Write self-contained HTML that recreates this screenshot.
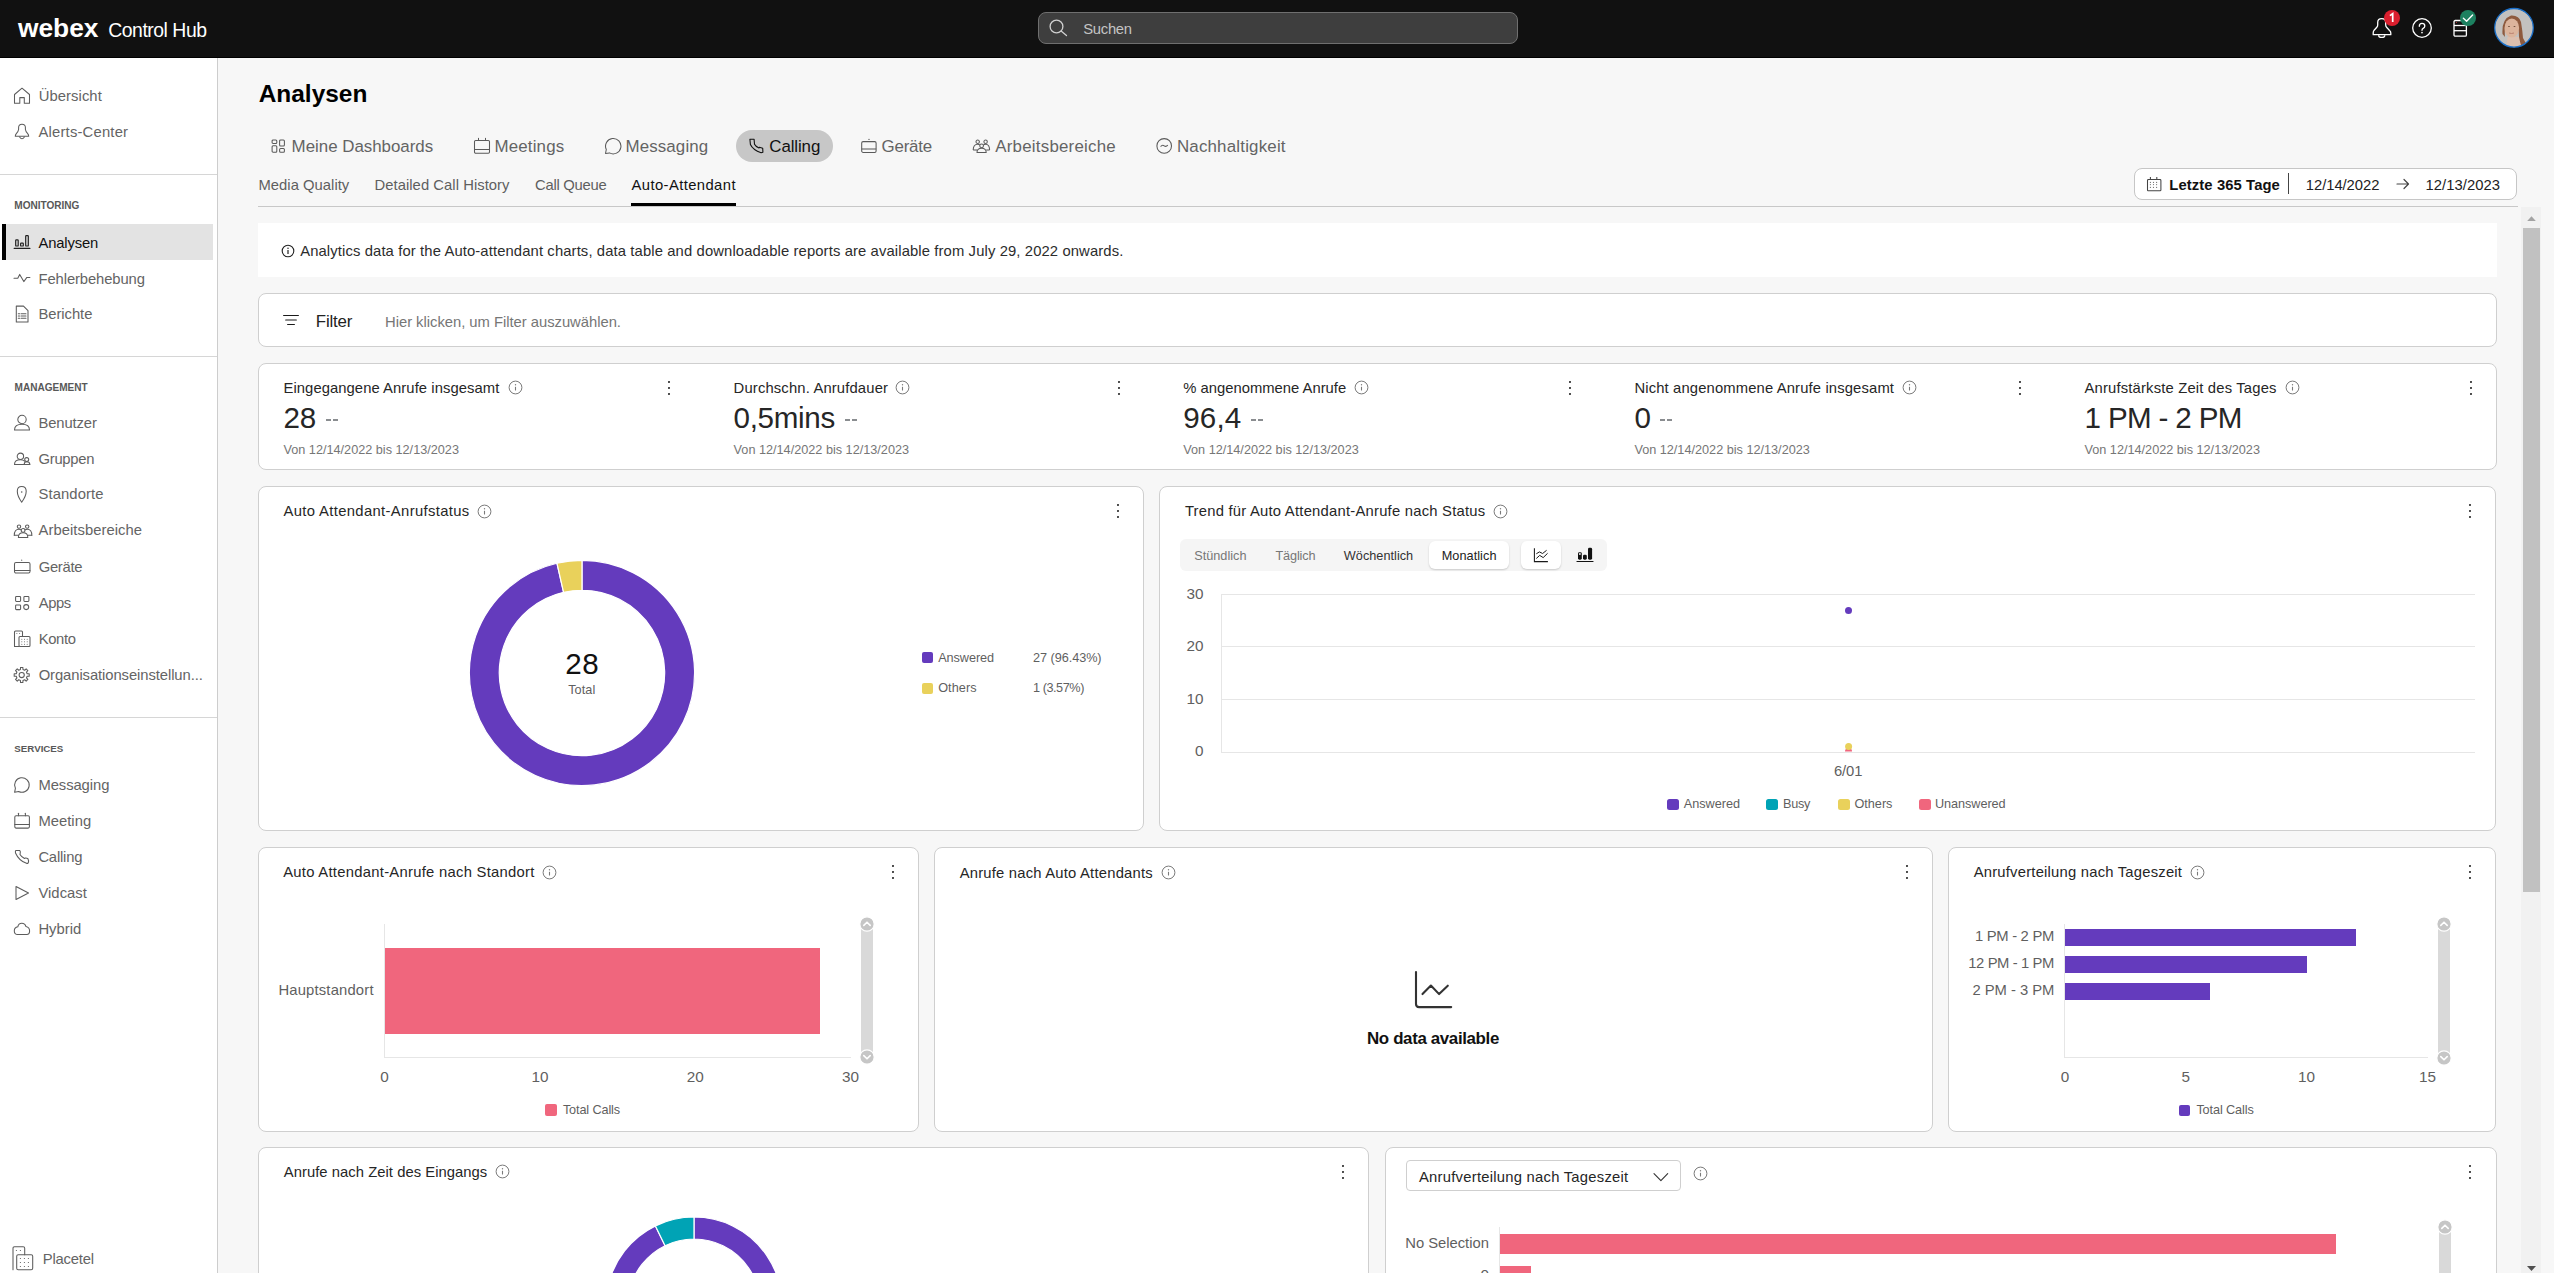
<!DOCTYPE html><html><head><meta charset="utf-8"><style>html,body{margin:0;padding:0;width:2554px;height:1273px;overflow:hidden;background:#f7f7f7;}body{position:relative;font-family:"Liberation Sans",sans-serif;}.t{position:absolute;white-space:nowrap;line-height:1;}</style></head><body><div style="position:absolute;left:218px;top:58px;width:2336px;height:1215px;background:#f7f7f7;"></div>
<div class="t" style="left:258.70px;top:82.00px;font-size:24.45px;color:#000;font-weight:700;">Analysen</div>
<svg style="position:absolute;left:271px;top:139px;" width="15" height="15" viewBox="0 0 15 15"><rect x="1.1" y="0.9" width="4.7" height="3.5" rx="1" fill="none" stroke="#5a5a5a" stroke-width="1.05" stroke-linejoin="round"/><rect x="8.6" y="0.9" width="4.8" height="6.1" rx="1" fill="none" stroke="#5a5a5a" stroke-width="1.05" stroke-linejoin="round"/><rect x="1.1" y="6.7" width="4.7" height="6.5" rx="1" fill="none" stroke="#5a5a5a" stroke-width="1.05" stroke-linejoin="round"/><rect x="8.6" y="9.5" width="4.8" height="3.7" rx="1" fill="none" stroke="#5a5a5a" stroke-width="1.05" stroke-linejoin="round"/></svg>
<div class="t" style="left:291.60px;top:139.00px;font-size:16.90px;color:#646464;letter-spacing:-0.012px;">Meine Dashboards</div>
<svg style="position:absolute;left:473px;top:137px;" width="18" height="18" viewBox="0 0 18 18"><rect x="1.5" y="3.4" width="15" height="12.9" rx="1.2" fill="none" stroke="#5a5a5a" stroke-width="1.05" stroke-linejoin="round"/><line x1="1.5" y1="12.5" x2="16.5" y2="12.5" fill="none" stroke="#5a5a5a" stroke-width="1.05" stroke-linejoin="round"/><line x1="5.5" y1="0.9" x2="5.5" y2="3.4" fill="none" stroke="#5a5a5a" stroke-width="1.05" stroke-linejoin="round"/><line x1="12.5" y1="0.9" x2="12.5" y2="3.4" fill="none" stroke="#5a5a5a" stroke-width="1.05" stroke-linejoin="round"/></svg>
<div class="t" style="left:494.60px;top:139.00px;font-size:16.90px;color:#646464;letter-spacing:0.141px;">Meetings</div>
<svg style="position:absolute;left:604px;top:137px;" width="18" height="18" viewBox="0 0 18 18"><path d="M2.3 12.5 A7.7 7.7 0 1 1 5.5 15.9 L1.5 16.5 Z" fill="none" stroke="#5a5a5a" stroke-width="1.05" stroke-linejoin="round"/></svg>
<div class="t" style="left:625.50px;top:139.00px;font-size:16.90px;color:#646464;letter-spacing:0.124px;">Messaging</div>
<div style="position:absolute;left:736px;top:130px;width:97px;height:32px;border-radius:16px;background:#c7c7c7;"></div>
<svg style="position:absolute;left:748px;top:137px;" width="17" height="17" viewBox="0 0 17 17"><path d="M1.9 2.3 L6.1 2.3 L6.5 7.3 Q7.5 9.5 11 10.9 L11.4 10.2 L14.7 11.3 L14.9 15.2 L13.1 15.7 Q5 13 2.4 7.5 Z" fill="none" stroke="#111" stroke-width="1.1" stroke-linejoin="round"/></svg>
<div class="t" style="left:769.30px;top:139.00px;font-size:16.90px;color:#111;letter-spacing:-0.105px;">Calling</div>
<svg style="position:absolute;left:860px;top:137px;" width="18" height="18" viewBox="0 0 18 18"><rect x="1.7" y="4.6" width="14.4" height="10.8" rx="1.4" fill="none" stroke="#5a5a5a" stroke-width="1.05" stroke-linejoin="round"/><line x1="1.7" y1="12" x2="16.1" y2="12" fill="none" stroke="#5a5a5a" stroke-width="1.05" stroke-linejoin="round"/><circle cx="9" cy="2.4" r="0.65" fill="#5a5a5a"/></svg>
<div class="t" style="left:881.60px;top:139.00px;font-size:16.90px;color:#646464;letter-spacing:-0.226px;">Geräte</div>
<svg style="position:absolute;left:972px;top:138px;" width="19" height="16" viewBox="0 0 19 16"><circle cx="5.7" cy="3.7" r="1.7" fill="none" stroke="#5a5a5a" stroke-width="1.05" stroke-linejoin="round"/><circle cx="13.6" cy="3.7" r="1.7" fill="none" stroke="#5a5a5a" stroke-width="1.05" stroke-linejoin="round"/><circle cx="9.6" cy="7.8" r="1.9" fill="none" stroke="#5a5a5a" stroke-width="1.05" stroke-linejoin="round"/><path d="M1.2 12 Q1.2 6.3 5.7 6.3 Q7 6.3 7.8 6.9" fill="none" stroke="#5a5a5a" stroke-width="1.05" stroke-linejoin="round"/><path d="M17.6 12 Q17.6 6.3 13.6 6.3 Q12.3 6.3 11.5 6.9" fill="none" stroke="#5a5a5a" stroke-width="1.05" stroke-linejoin="round"/><line x1="1.2" y1="12" x2="5" y2="12" fill="none" stroke="#5a5a5a" stroke-width="1.05" stroke-linejoin="round"/><line x1="14.2" y1="12" x2="17.6" y2="12" fill="none" stroke="#5a5a5a" stroke-width="1.05" stroke-linejoin="round"/><path d="M5 14.4 Q5 10.3 9.6 10.3 Q14.2 10.3 14.2 14.4 Z" fill="none" stroke="#5a5a5a" stroke-width="1.05" stroke-linejoin="round"/></svg>
<div class="t" style="left:995.30px;top:139.00px;font-size:16.90px;color:#646464;letter-spacing:0.218px;">Arbeitsbereiche</div>
<svg style="position:absolute;left:1155px;top:137px;" width="18" height="18" viewBox="0 0 18 18"><circle cx="9.2" cy="8.9" r="7.3" fill="none" stroke="#5a5a5a" stroke-width="1.05" stroke-linejoin="round"/><path d="M5.6 9.6 Q7.3 7.4 9.2 8.8 Q11 10.3 12.8 8.2" fill="none" stroke="#5a5a5a" stroke-width="1.05" stroke-linejoin="round"/></svg>
<div class="t" style="left:1176.90px;top:139.00px;font-size:16.90px;color:#646464;letter-spacing:0.198px;">Nachhaltigkeit</div>
<div class="t" style="left:258.50px;top:178.00px;font-size:14.80px;color:#5f5f5f;letter-spacing:0.025px;">Media Quality</div>
<div class="t" style="left:374.50px;top:178.00px;font-size:14.80px;color:#5f5f5f;letter-spacing:0.046px;">Detailed Call History</div>
<div class="t" style="left:535.10px;top:178.00px;font-size:14.80px;color:#5f5f5f;letter-spacing:-0.264px;">Call Queue</div>
<div class="t" style="left:631.50px;top:178.00px;font-size:14.80px;color:#111;letter-spacing:0.406px;">Auto-Attendant</div>
<div style="position:absolute;left:258px;top:206px;width:2260px;height:1px;background:#c8c8c8;"></div>
<div style="position:absolute;left:631px;top:203px;width:105px;height:3px;background:#000;"></div>
<div style="position:absolute;left:2134px;top:168px;width:381px;height:30px;border:1px solid #c6c6c6;border-radius:8px;background:#fff;"></div>
<svg style="position:absolute;left:2146px;top:176px;" width="17" height="17" viewBox="0 0 17 17"><rect x="1.5" y="3.5" width="13.4" height="11.3" rx="0.9" fill="none" stroke="#444" stroke-width="1.05"/><line x1="4.4" y1="1" x2="4.4" y2="3.5" stroke="#444" stroke-width="1.05"/><line x1="10.8" y1="1" x2="10.8" y2="3.5" stroke="#444" stroke-width="1.05"/><circle cx="4.4" cy="6.4" r="0.6" fill="#777"/><circle cx="4.4" cy="8.6" r="0.6" fill="#777"/><circle cx="4.4" cy="11.4" r="0.6" fill="#777"/><circle cx="7.5" cy="6.4" r="0.6" fill="#777"/><circle cx="7.5" cy="8.6" r="0.6" fill="#777"/><circle cx="7.5" cy="11.4" r="0.6" fill="#777"/><circle cx="10.6" cy="6.4" r="0.6" fill="#777"/><circle cx="10.6" cy="8.6" r="0.6" fill="#777"/><circle cx="10.6" cy="11.4" r="0.6" fill="#777"/></svg>
<div class="t" style="left:2169.30px;top:178.00px;font-size:14.80px;color:#111;font-weight:700;letter-spacing:0.104px;">Letzte 365 Tage</div>
<div style="position:absolute;left:2288px;top:173px;width:1px;height:21px;background:#444;"></div>
<div class="t" style="left:2305.80px;top:178.00px;font-size:14.80px;color:#222;letter-spacing:-0.053px;">12/14/2022</div>
<svg style="position:absolute;left:2396px;top:178px;" width="14" height="12" viewBox="0 0 14 12"><path d="M1 6 L12.5 6 M8 1.5 L12.5 6 L8 10.5" fill="none" stroke="#444" stroke-width="1.2" stroke-linecap="round" stroke-linejoin="round"/></svg>
<div class="t" style="left:2425.60px;top:178.00px;font-size:14.80px;color:#222;letter-spacing:0.025px;">12/13/2023</div>
<div style="position:absolute;left:2521px;top:207px;width:20px;height:1066px;background:#f1f1f1;"></div>
<div style="position:absolute;left:2523px;top:228px;width:17px;height:664px;background:#c1c1c1;"></div>
<svg style="position:absolute;left:2526px;top:214px;" width="11" height="8" viewBox="0 0 11 8"><path d="M1.2 7 L5.5 2.2 L9.8 7 Z" fill="#a3a3a3"/></svg>
<svg style="position:absolute;left:2526px;top:1265px;" width="11" height="8" viewBox="0 0 11 8"><path d="M1 1 L5.5 6 L10 1 Z" fill="#505050"/></svg>
<div style="position:absolute;left:258px;top:223px;width:2239px;height:54px;background:#fff;"></div>
<svg style="position:absolute;left:281px;top:244px;" width="14" height="14" viewBox="0 0 14 14"><circle cx="7" cy="7" r="5.8" fill="none" stroke="#222" stroke-width="1.1"/><line x1="7" y1="6" x2="7" y2="10" stroke="#222" stroke-width="1.2"/><circle cx="7" cy="4.2" r="0.75" fill="#222"/></svg>
<div class="t" style="left:300.20px;top:244.00px;font-size:14.80px;color:#2c2c2c;letter-spacing:0.119px;">Analytics data for the Auto-attendant charts, data table and downloadable reports are available from July 29, 2022 onwards.</div>
<div style="position:absolute;left:258px;top:293px;width:2237px;height:52px;border:1px solid #cfcfcf;border-radius:8px;background:#fff;"></div>
<svg style="position:absolute;left:282px;top:313px;" width="18" height="14" viewBox="0 0 18 14"><line x1="1.6" y1="2.5" x2="16.4" y2="2.5" stroke="#1a1a1a" stroke-width="1.15" stroke-linecap="round"/><line x1="3.7" y1="7" x2="14.3" y2="7" stroke="#1a1a1a" stroke-width="1.15" stroke-linecap="round"/><line x1="5.6" y1="11.5" x2="12.4" y2="11.5" stroke="#1a1a1a" stroke-width="1.15" stroke-linecap="round"/></svg>
<div class="t" style="left:315.80px;top:314.00px;font-size:16.90px;color:#222;letter-spacing:-0.204px;">Filter</div>
<div class="t" style="left:385.00px;top:315.00px;font-size:14.80px;color:#767676;letter-spacing:-0.025px;">Hier klicken, um Filter auszuwählen.</div>
<div style="position:absolute;left:258px;top:363px;width:2237px;height:105px;border:1px solid #cfcfcf;border-radius:8px;background:#fff;"></div>
<div class="t" style="left:283.50px;top:381.00px;font-size:14.80px;color:#262626;letter-spacing:0.067px;">Eingegangene Anrufe insgesamt</div>
<svg style="position:absolute;left:508px;top:380px;" width="15" height="15" viewBox="0 0 15 15"><circle cx="7.5" cy="7.5" r="6.4" fill="none" stroke="#7a7a7a" stroke-width="1"/><line x1="7.5" y1="6.8" x2="7.5" y2="10.5" stroke="#7a7a7a" stroke-width="1.1"/><circle cx="7.5" cy="4.8" r="0.7" fill="#7a7a7a"/></svg>
<svg style="position:absolute;left:666.3px;top:379px;" width="6" height="18" viewBox="0 0 6 18"><circle cx="3" cy="3" r="1.05" fill="#222"/><circle cx="3" cy="9" r="1.05" fill="#222"/><circle cx="3" cy="15" r="1.05" fill="#222"/></svg>
<div class="t" style="left:283.50px;top:403.00px;font-size:29.60px;color:#262626;letter-spacing:-0.156px;">28</div>
<div style="position:absolute;left:326px;top:419px;width:5px;height:2px;background:#8a8d90;"></div>
<div style="position:absolute;left:333px;top:419px;width:5px;height:2px;background:#8a8d90;"></div>
<div class="t" style="left:283.50px;top:444.00px;font-size:12.70px;color:#767676;letter-spacing:-0.008px;">Von 12/14/2022 bis 12/13/2023</div>
<div class="t" style="left:733.60px;top:381.00px;font-size:14.80px;color:#262626;letter-spacing:0.150px;">Durchschn. Anrufdauer</div>
<svg style="position:absolute;left:895px;top:380px;" width="15" height="15" viewBox="0 0 15 15"><circle cx="7.5" cy="7.5" r="6.4" fill="none" stroke="#7a7a7a" stroke-width="1"/><line x1="7.5" y1="6.8" x2="7.5" y2="10.5" stroke="#7a7a7a" stroke-width="1.1"/><circle cx="7.5" cy="4.8" r="0.7" fill="#7a7a7a"/></svg>
<svg style="position:absolute;left:1116.4px;top:379px;" width="6" height="18" viewBox="0 0 6 18"><circle cx="3" cy="3" r="1.05" fill="#222"/><circle cx="3" cy="9" r="1.05" fill="#222"/><circle cx="3" cy="15" r="1.05" fill="#222"/></svg>
<div class="t" style="left:733.60px;top:403.00px;font-size:29.60px;color:#262626;letter-spacing:-0.333px;">0,5mins</div>
<div style="position:absolute;left:845px;top:419px;width:5px;height:2px;background:#8a8d90;"></div>
<div style="position:absolute;left:852px;top:419px;width:5px;height:2px;background:#8a8d90;"></div>
<div class="t" style="left:733.60px;top:444.00px;font-size:12.70px;color:#767676;letter-spacing:-0.008px;">Von 12/14/2022 bis 12/13/2023</div>
<div class="t" style="left:1183.30px;top:381.00px;font-size:14.80px;color:#262626;">% angenommene Anrufe</div>
<svg style="position:absolute;left:1354px;top:380px;" width="15" height="15" viewBox="0 0 15 15"><circle cx="7.5" cy="7.5" r="6.4" fill="none" stroke="#7a7a7a" stroke-width="1"/><line x1="7.5" y1="6.8" x2="7.5" y2="10.5" stroke="#7a7a7a" stroke-width="1.1"/><circle cx="7.5" cy="4.8" r="0.7" fill="#7a7a7a"/></svg>
<svg style="position:absolute;left:1566.5px;top:379px;" width="6" height="18" viewBox="0 0 6 18"><circle cx="3" cy="3" r="1.05" fill="#222"/><circle cx="3" cy="9" r="1.05" fill="#222"/><circle cx="3" cy="15" r="1.05" fill="#222"/></svg>
<div class="t" style="left:1183.30px;top:403.00px;font-size:29.60px;color:#262626;letter-spacing:0.109px;">96,4</div>
<div style="position:absolute;left:1251px;top:419px;width:5px;height:2px;background:#8a8d90;"></div>
<div style="position:absolute;left:1258px;top:419px;width:5px;height:2px;background:#8a8d90;"></div>
<div class="t" style="left:1183.30px;top:444.00px;font-size:12.70px;color:#767676;letter-spacing:-0.008px;">Von 12/14/2022 bis 12/13/2023</div>
<div class="t" style="left:1634.40px;top:381.00px;font-size:14.80px;color:#262626;letter-spacing:0.139px;">Nicht angenommene Anrufe insgesamt</div>
<svg style="position:absolute;left:1902px;top:380px;" width="15" height="15" viewBox="0 0 15 15"><circle cx="7.5" cy="7.5" r="6.4" fill="none" stroke="#7a7a7a" stroke-width="1"/><line x1="7.5" y1="6.8" x2="7.5" y2="10.5" stroke="#7a7a7a" stroke-width="1.1"/><circle cx="7.5" cy="4.8" r="0.7" fill="#7a7a7a"/></svg>
<svg style="position:absolute;left:2017px;top:379px;" width="6" height="18" viewBox="0 0 6 18"><circle cx="3" cy="3" r="1.05" fill="#222"/><circle cx="3" cy="9" r="1.05" fill="#222"/><circle cx="3" cy="15" r="1.05" fill="#222"/></svg>
<div class="t" style="left:1634.40px;top:403.00px;font-size:29.60px;color:#262626;">0</div>
<div style="position:absolute;left:1660px;top:419px;width:5px;height:2px;background:#8a8d90;"></div>
<div style="position:absolute;left:1667px;top:419px;width:5px;height:2px;background:#8a8d90;"></div>
<div class="t" style="left:1634.40px;top:444.00px;font-size:12.70px;color:#767676;letter-spacing:-0.008px;">Von 12/14/2022 bis 12/13/2023</div>
<div class="t" style="left:2084.50px;top:381.00px;font-size:14.80px;color:#262626;letter-spacing:0.174px;">Anrufstärkste Zeit des Tages</div>
<svg style="position:absolute;left:2285px;top:380px;" width="15" height="15" viewBox="0 0 15 15"><circle cx="7.5" cy="7.5" r="6.4" fill="none" stroke="#7a7a7a" stroke-width="1"/><line x1="7.5" y1="6.8" x2="7.5" y2="10.5" stroke="#7a7a7a" stroke-width="1.1"/><circle cx="7.5" cy="4.8" r="0.7" fill="#7a7a7a"/></svg>
<svg style="position:absolute;left:2467.8px;top:379px;" width="6" height="18" viewBox="0 0 6 18"><circle cx="3" cy="3" r="1.05" fill="#222"/><circle cx="3" cy="9" r="1.05" fill="#222"/><circle cx="3" cy="15" r="1.05" fill="#222"/></svg>
<div class="t" style="left:2084.50px;top:403.00px;font-size:29.60px;color:#262626;letter-spacing:-0.643px;">1 PM - 2 PM</div>
<div class="t" style="left:2084.50px;top:444.00px;font-size:12.70px;color:#767676;letter-spacing:-0.008px;">Von 12/14/2022 bis 12/13/2023</div>
<div style="position:absolute;left:258px;top:486px;width:884px;height:343px;border:1px solid #cfcfcf;border-radius:8px;background:#fff;"></div>
<div class="t" style="left:283.50px;top:504.00px;font-size:14.80px;color:#262626;letter-spacing:0.354px;">Auto Attendant-Anrufstatus</div>
<svg style="position:absolute;left:477px;top:504px;" width="15" height="15" viewBox="0 0 15 15"><circle cx="7.5" cy="7.5" r="6.4" fill="none" stroke="#7a7a7a" stroke-width="1"/><line x1="7.5" y1="6.8" x2="7.5" y2="10.5" stroke="#7a7a7a" stroke-width="1.1"/><circle cx="7.5" cy="4.8" r="0.7" fill="#7a7a7a"/></svg>
<svg style="position:absolute;left:1115px;top:502px;" width="6" height="18" viewBox="0 0 6 18"><circle cx="3" cy="3" r="1.05" fill="#222"/><circle cx="3" cy="9" r="1.05" fill="#222"/><circle cx="3" cy="15" r="1.05" fill="#222"/></svg>
<svg style="position:absolute;left:452px;top:542.5px;" width="260" height="260" viewBox="0 0 260 260"><path d="M130.00 17.40 A112.6 112.6 0 1 1 104.94 20.22 L111.59 49.37 A82.7 82.7 0 1 0 130.00 47.30 Z" fill="#643bbd" stroke="#fff" stroke-width="1.2"/><path d="M104.94 20.22 A112.6 112.6 0 0 1 129.98 17.40 L129.99 47.30 A82.7 82.7 0 0 0 111.59 49.37 Z" fill="#e9d15b" stroke="#fff" stroke-width="1.2"/></svg>
<div class="t" style="left:565.30px;top:649.00px;font-size:29.60px;color:#111;letter-spacing:0.544px;">28</div>
<div class="t" style="left:568.15px;top:684.00px;font-size:12.70px;color:#5f5f5f;letter-spacing:0.076px;">Total</div>
<div style="position:absolute;left:921.5px;top:651.5px;width:11px;height:11px;background:#643bbd;border-radius:2px;"></div>
<div class="t" style="left:938.20px;top:652.00px;font-size:12.70px;color:#5f5f5f;letter-spacing:-0.064px;">Answered</div>
<div class="t" style="left:1033.00px;top:652.00px;font-size:12.70px;color:#5f5f5f;letter-spacing:-0.052px;">27 (96.43%)</div>
<div style="position:absolute;left:921.5px;top:682.5px;width:11px;height:11px;background:#e9d15b;border-radius:2px;"></div>
<div class="t" style="left:938.20px;top:682.00px;font-size:12.70px;color:#5f5f5f;letter-spacing:0.060px;">Others</div>
<div class="t" style="left:1033.00px;top:682.00px;font-size:12.70px;color:#5f5f5f;letter-spacing:-0.457px;">1 (3.57%)</div>
<div style="position:absolute;left:1159px;top:486px;width:1335px;height:343px;border:1px solid #cfcfcf;border-radius:8px;background:#fff;"></div>
<div class="t" style="left:1184.90px;top:504.00px;font-size:14.80px;color:#262626;letter-spacing:0.230px;">Trend für Auto Attendant-Anrufe nach Status</div>
<svg style="position:absolute;left:1493px;top:504px;" width="15" height="15" viewBox="0 0 15 15"><circle cx="7.5" cy="7.5" r="6.4" fill="none" stroke="#7a7a7a" stroke-width="1"/><line x1="7.5" y1="6.8" x2="7.5" y2="10.5" stroke="#7a7a7a" stroke-width="1.1"/><circle cx="7.5" cy="4.8" r="0.7" fill="#7a7a7a"/></svg>
<svg style="position:absolute;left:2466.6px;top:502px;" width="6" height="18" viewBox="0 0 6 18"><circle cx="3" cy="3" r="1.05" fill="#222"/><circle cx="3" cy="9" r="1.05" fill="#222"/><circle cx="3" cy="15" r="1.05" fill="#222"/></svg>
<div style="position:absolute;left:1180px;top:539px;width:427px;height:32px;border-radius:6px;background:#f5f5f5;"></div>
<div class="t" style="left:1194.20px;top:550.00px;font-size:12.70px;color:#777;letter-spacing:0.017px;">Stündlich</div>
<div class="t" style="left:1275.50px;top:550.00px;font-size:12.70px;color:#777;letter-spacing:-0.160px;">Täglich</div>
<div class="t" style="left:1343.80px;top:550.00px;font-size:12.70px;color:#333;letter-spacing:0.025px;">Wöchentlich</div>
<div style="position:absolute;left:1429px;top:541px;width:80px;height:28px;border-radius:6px;background:#fff;box-shadow:0 1px 2px rgba(0,0,0,0.18);"></div>
<div class="t" style="left:1441.70px;top:550.00px;font-size:12.70px;color:#222;letter-spacing:0.056px;">Monatlich</div>
<div style="position:absolute;left:1521px;top:541px;width:40px;height:28px;border-radius:6px;background:#fff;box-shadow:0 1px 2px rgba(0,0,0,0.18);"></div>
<svg style="position:absolute;left:1533px;top:547px;" width="17" height="17" viewBox="0 0 17 17"><path d="M1.4 1.2 L1.4 14.6 L14.9 14.6" fill="none" stroke="#1a1a1a" stroke-width="1.05"/><path d="M3.3 6.8 L6.4 4.9 L9.6 6.5 L13.6 3.3" fill="none" stroke="#1a1a1a" stroke-width="1"/><path d="M3.3 11.5 L6.7 8.4 L10.2 10.6 L14.6 6.3" fill="none" stroke="#1a1a1a" stroke-width="1"/></svg>
<svg style="position:absolute;left:1576px;top:547px;" width="18" height="17" viewBox="0 0 18 17"><rect x="2" y="5.2" width="3.8" height="7.5" rx="1.4" fill="#111"/><circle cx="3.9" cy="7" r="0.9" fill="#fff"/><rect x="7" y="7.7" width="3.8" height="5" rx="1.4" fill="#111"/><rect x="12" y="0.8" width="4.1" height="11.9" rx="1.4" fill="#111"/><line x1="1" y1="14.5" x2="17" y2="14.5" stroke="#111" stroke-width="1.2" stroke-linecap="round"/></svg>
<div style="position:absolute;left:1221px;top:594px;width:1254px;height:1px;background:#e6e6e6;"></div>
<div class="t" style="left:1186.42px;top:586.00px;font-size:15.30px;color:#5f5f5f;">30</div>
<div style="position:absolute;left:1221px;top:646px;width:1254px;height:1px;background:#e6e6e6;"></div>
<div class="t" style="left:1186.42px;top:638.00px;font-size:15.30px;color:#5f5f5f;">20</div>
<div style="position:absolute;left:1221px;top:699px;width:1254px;height:1px;background:#e6e6e6;"></div>
<div class="t" style="left:1186.42px;top:691.00px;font-size:15.30px;color:#5f5f5f;">10</div>
<div style="position:absolute;left:1221px;top:752px;width:1254px;height:1px;background:#e6e6e6;"></div>
<div class="t" style="left:1194.91px;top:743.00px;font-size:15.30px;color:#5f5f5f;">0</div>
<div style="position:absolute;left:1221px;top:594px;width:1px;height:158px;background:#e6e6e6;"></div>
<svg style="position:absolute;left:1842px;top:604px;" width="13" height="13" viewBox="0 0 13 13"><circle cx="6.5" cy="6.6" r="3.5" fill="#643bbd"/></svg>
<svg style="position:absolute;left:1842px;top:740px;" width="13" height="13" viewBox="0 0 13 13"><path d="M3 11.5 A3.5 3.5 0 0 1 10 11.5 Z" fill="#f0667d"/><circle cx="6.6" cy="6.6" r="3.5" fill="#e9d15b"/></svg>
<div class="t" style="left:1834.00px;top:764.00px;font-size:14.80px;color:#5f5f5f;letter-spacing:-0.129px;">6/01</div>
<div style="position:absolute;left:1666.6px;top:798.7px;width:12px;height:11.6px;background:#643bbd;border-radius:2.5px;"></div>
<div class="t" style="left:1683.80px;top:798.00px;font-size:12.70px;color:#5f5f5f;letter-spacing:-0.036px;">Answered</div>
<div style="position:absolute;left:1765.9px;top:798.7px;width:12px;height:11.6px;background:#00a3b5;border-radius:2.5px;"></div>
<div class="t" style="left:1783.00px;top:798.00px;font-size:12.70px;color:#5f5f5f;letter-spacing:-0.286px;">Busy</div>
<div style="position:absolute;left:1837.8px;top:798.7px;width:12px;height:11.6px;background:#e9d15b;border-radius:2.5px;"></div>
<div class="t" style="left:1854.40px;top:798.00px;font-size:12.70px;color:#5f5f5f;">Others</div>
<div style="position:absolute;left:1918.8px;top:798.7px;width:12px;height:11.6px;background:#f0667d;border-radius:2.5px;"></div>
<div class="t" style="left:1934.90px;top:798.00px;font-size:12.70px;color:#5f5f5f;letter-spacing:-0.057px;">Unanswered</div>
<div style="position:absolute;left:258px;top:847px;width:659px;height:283px;border:1px solid #cfcfcf;border-radius:8px;background:#fff;"></div>
<div class="t" style="left:283.20px;top:865.00px;font-size:14.80px;color:#262626;letter-spacing:0.276px;">Auto Attendant-Anrufe nach Standort</div>
<svg style="position:absolute;left:542px;top:865px;" width="15" height="15" viewBox="0 0 15 15"><circle cx="7.5" cy="7.5" r="6.4" fill="none" stroke="#7a7a7a" stroke-width="1"/><line x1="7.5" y1="6.8" x2="7.5" y2="10.5" stroke="#7a7a7a" stroke-width="1.1"/><circle cx="7.5" cy="4.8" r="0.7" fill="#7a7a7a"/></svg>
<svg style="position:absolute;left:890px;top:863px;" width="6" height="18" viewBox="0 0 6 18"><circle cx="3" cy="3" r="1.05" fill="#222"/><circle cx="3" cy="9" r="1.05" fill="#222"/><circle cx="3" cy="15" r="1.05" fill="#222"/></svg>
<div style="position:absolute;left:384px;top:924px;width:1px;height:134px;background:#e6e6e6;"></div>
<div style="position:absolute;left:384px;top:1057px;width:467px;height:1px;background:#e6e6e6;"></div>
<div style="position:absolute;left:385px;top:948px;width:435px;height:86px;background:#f0667d;"></div>
<div class="t" style="left:278.40px;top:983.00px;font-size:14.80px;color:#5f5f5f;letter-spacing:0.180px;">Hauptstandort</div>
<div class="t" style="left:380.35px;top:1069.00px;font-size:15.30px;color:#5f5f5f;">0</div>
<div class="t" style="left:531.51px;top:1069.00px;font-size:15.30px;color:#5f5f5f;">10</div>
<div class="t" style="left:686.81px;top:1069.00px;font-size:15.30px;color:#5f5f5f;">20</div>
<div class="t" style="left:842.11px;top:1069.00px;font-size:15.30px;color:#5f5f5f;">30</div>
<div style="position:absolute;left:861px;top:924px;width:12px;height:133px;background:#d9d9d9;"></div>
<svg style="position:absolute;left:858px;top:915px;" width="18" height="18" viewBox="0 0 18 18"><circle cx="9" cy="9" r="7.2" fill="#c6c6c6" stroke="#fff" stroke-width="1.2"/><path transform="translate(9 9)" d="M-3.2 1.4 L0 -1.8 L3.2 1.4" fill="none" stroke="#fff" stroke-width="1.6" stroke-linecap="round" stroke-linejoin="round"/></svg>
<svg style="position:absolute;left:858px;top:1048px;" width="18" height="18" viewBox="0 0 18 18"><circle cx="9" cy="9" r="7.2" fill="#c6c6c6" stroke="#fff" stroke-width="1.2"/><path transform="translate(9 9)" d="M-3.2 -1.4 L0 1.8 L3.2 -1.4" fill="none" stroke="#fff" stroke-width="1.6" stroke-linecap="round" stroke-linejoin="round"/></svg>
<div style="position:absolute;left:545.3px;top:1104.2px;width:11.4px;height:12px;background:#f0667d;border-radius:2px;"></div>
<div class="t" style="left:562.90px;top:1104.00px;font-size:12.70px;color:#5f5f5f;letter-spacing:-0.131px;">Total Calls</div>
<div style="position:absolute;left:934px;top:847px;width:997px;height:283px;border:1px solid #cfcfcf;border-radius:8px;background:#fff;"></div>
<div class="t" style="left:959.70px;top:866.00px;font-size:14.80px;color:#262626;letter-spacing:0.208px;">Anrufe nach Auto Attendants</div>
<svg style="position:absolute;left:1161px;top:865px;" width="15" height="15" viewBox="0 0 15 15"><circle cx="7.5" cy="7.5" r="6.4" fill="none" stroke="#7a7a7a" stroke-width="1"/><line x1="7.5" y1="6.8" x2="7.5" y2="10.5" stroke="#7a7a7a" stroke-width="1.1"/><circle cx="7.5" cy="4.8" r="0.7" fill="#7a7a7a"/></svg>
<svg style="position:absolute;left:1903.7px;top:863px;" width="6" height="18" viewBox="0 0 6 18"><circle cx="3" cy="3" r="1.05" fill="#222"/><circle cx="3" cy="9" r="1.05" fill="#222"/><circle cx="3" cy="15" r="1.05" fill="#222"/></svg>
<svg style="position:absolute;left:1412px;top:970px;" width="42" height="40" viewBox="0 0 42 40"><path d="M4 2.1 L4 34 Q4 37.1 7.1 37.1 L39.2 37.1" fill="none" stroke="#333" stroke-width="2.1" stroke-linecap="round"/><path d="M10.5 24.1 L18.9 15.5 L27.1 24.1 L35.8 15.7" fill="none" stroke="#333" stroke-width="2.1" stroke-linecap="round" stroke-linejoin="round"/></svg>
<div class="t" style="left:1367.00px;top:1031.00px;font-size:16.90px;color:#111;font-weight:700;letter-spacing:-0.355px;">No data available</div>
<div style="position:absolute;left:1948px;top:847px;width:546px;height:283px;border:1px solid #cfcfcf;border-radius:8px;background:#fff;"></div>
<div class="t" style="left:1973.70px;top:865.00px;font-size:14.80px;color:#262626;letter-spacing:0.214px;">Anrufverteilung nach Tageszeit</div>
<svg style="position:absolute;left:2190px;top:865px;" width="15" height="15" viewBox="0 0 15 15"><circle cx="7.5" cy="7.5" r="6.4" fill="none" stroke="#7a7a7a" stroke-width="1"/><line x1="7.5" y1="6.8" x2="7.5" y2="10.5" stroke="#7a7a7a" stroke-width="1.1"/><circle cx="7.5" cy="4.8" r="0.7" fill="#7a7a7a"/></svg>
<svg style="position:absolute;left:2467.3px;top:863px;" width="6" height="18" viewBox="0 0 6 18"><circle cx="3" cy="3" r="1.05" fill="#222"/><circle cx="3" cy="9" r="1.05" fill="#222"/><circle cx="3" cy="15" r="1.05" fill="#222"/></svg>
<div style="position:absolute;left:2064px;top:924px;width:1px;height:134px;background:#e6e6e6;"></div>
<div style="position:absolute;left:2064px;top:1057px;width:364px;height:1px;background:#e6e6e6;"></div>
<div style="position:absolute;left:2065px;top:929px;width:290.5px;height:17px;background:#643bbd;"></div>
<div class="t" style="left:1974.90px;top:929.00px;font-size:14.80px;color:#5f5f5f;letter-spacing:-0.281px;">1 PM - 2 PM</div>
<div style="position:absolute;left:2065px;top:956px;width:242px;height:17px;background:#643bbd;"></div>
<div class="t" style="left:1968.30px;top:956.00px;font-size:14.80px;color:#5f5f5f;letter-spacing:-0.409px;">12 PM - 1 PM</div>
<div style="position:absolute;left:2065px;top:983px;width:145.30000000000018px;height:17px;background:#643bbd;"></div>
<div class="t" style="left:1972.50px;top:983.00px;font-size:14.80px;color:#5f5f5f;letter-spacing:-0.041px;">2 PM - 3 PM</div>
<div class="t" style="left:2060.65px;top:1069.00px;font-size:15.30px;color:#5f5f5f;">0</div>
<div class="t" style="left:2181.55px;top:1069.00px;font-size:15.30px;color:#5f5f5f;">5</div>
<div class="t" style="left:2298.01px;top:1069.00px;font-size:15.30px;color:#5f5f5f;">10</div>
<div class="t" style="left:2418.91px;top:1069.00px;font-size:15.30px;color:#5f5f5f;">15</div>
<div style="position:absolute;left:2438px;top:924px;width:12px;height:134px;background:#d9d9d9;"></div>
<svg style="position:absolute;left:2435px;top:915px;" width="18" height="18" viewBox="0 0 18 18"><circle cx="9" cy="9" r="7.2" fill="#c6c6c6" stroke="#fff" stroke-width="1.2"/><path transform="translate(9 9)" d="M-3.2 1.4 L0 -1.8 L3.2 1.4" fill="none" stroke="#fff" stroke-width="1.6" stroke-linecap="round" stroke-linejoin="round"/></svg>
<svg style="position:absolute;left:2435px;top:1049px;" width="18" height="18" viewBox="0 0 18 18"><circle cx="9" cy="9" r="7.2" fill="#c6c6c6" stroke="#fff" stroke-width="1.2"/><path transform="translate(9 9)" d="M-3.2 -1.4 L0 1.8 L3.2 -1.4" fill="none" stroke="#fff" stroke-width="1.6" stroke-linecap="round" stroke-linejoin="round"/></svg>
<div style="position:absolute;left:2178.7px;top:1104.7px;width:11.6px;height:11.5px;background:#643bbd;border-radius:2px;"></div>
<div class="t" style="left:2196.40px;top:1104.00px;font-size:12.70px;color:#5f5f5f;letter-spacing:-0.111px;">Total Calls</div>
<div style="position:absolute;left:258px;top:1147px;width:1109px;height:142px;border:1px solid #cfcfcf;border-radius:8px;background:#fff;"></div>
<div class="t" style="left:283.80px;top:1165.00px;font-size:14.80px;color:#262626;letter-spacing:0.040px;">Anrufe nach Zeit des Eingangs</div>
<svg style="position:absolute;left:495px;top:1164px;" width="15" height="15" viewBox="0 0 15 15"><circle cx="7.5" cy="7.5" r="6.4" fill="none" stroke="#7a7a7a" stroke-width="1"/><line x1="7.5" y1="6.8" x2="7.5" y2="10.5" stroke="#7a7a7a" stroke-width="1.1"/><circle cx="7.5" cy="4.8" r="0.7" fill="#7a7a7a"/></svg>
<svg style="position:absolute;left:1340.2px;top:1163px;" width="6" height="18" viewBox="0 0 6 18"><circle cx="3" cy="3" r="1.05" fill="#222"/><circle cx="3" cy="9" r="1.05" fill="#222"/><circle cx="3" cy="15" r="1.05" fill="#222"/></svg>
<svg style="position:absolute;left:594.4px;top:1204.5px;" width="200" height="200" viewBox="0 0 200 200"><path d="M100.00 12.00 A88 88 0 1 1 61.42 20.91 L71.07 40.68 A66 66 0 1 0 100.00 34.00 Z" fill="#643bbd" stroke="#fff" stroke-width="1.2"/><path d="M61.42 20.91 A88 88 0 0 1 99.98 12.00 L99.99 34.00 A66 66 0 0 0 71.07 40.68 Z" fill="#00a3b5" stroke="#fff" stroke-width="1.2"/></svg>
<div style="position:absolute;left:1385px;top:1147px;width:1110px;height:142px;border:1px solid #cfcfcf;border-radius:8px;background:#fff;"></div>
<div style="position:absolute;left:1406px;top:1160px;width:273px;height:29px;border:1px solid #cfcfcf;border-radius:4px;background:#fff;"></div>
<div class="t" style="left:1419.00px;top:1170.00px;font-size:14.80px;color:#262626;letter-spacing:0.245px;">Anrufverteilung nach Tageszeit</div>
<svg style="position:absolute;left:1652px;top:1170px;" width="18" height="13" viewBox="0 0 18 13"><path d="M2 3.6 L8.9 10.6 L15.7 3.6" fill="none" stroke="#333" stroke-width="1.1" stroke-linecap="round" stroke-linejoin="round"/></svg>
<svg style="position:absolute;left:1693px;top:1166px;" width="15" height="15" viewBox="0 0 15 15"><circle cx="7.5" cy="7.5" r="6.4" fill="none" stroke="#7a7a7a" stroke-width="1"/><line x1="7.5" y1="6.8" x2="7.5" y2="10.5" stroke="#7a7a7a" stroke-width="1.1"/><circle cx="7.5" cy="4.8" r="0.7" fill="#7a7a7a"/></svg>
<svg style="position:absolute;left:2467px;top:1163px;" width="6" height="18" viewBox="0 0 6 18"><circle cx="3" cy="3" r="1.05" fill="#222"/><circle cx="3" cy="9" r="1.05" fill="#222"/><circle cx="3" cy="15" r="1.05" fill="#222"/></svg>
<div style="position:absolute;left:1499px;top:1227px;width:1px;height:46px;background:#e6e6e6;"></div>
<div style="position:absolute;left:1500px;top:1234px;width:836px;height:20px;background:#f0667d;"></div>
<div style="position:absolute;left:1500px;top:1266px;width:31px;height:7px;background:#f0667d;"></div>
<div class="t" style="left:1405.30px;top:1236.00px;font-size:14.80px;color:#5f5f5f;letter-spacing:-0.029px;">No Selection</div>
<div class="t" style="left:1480.41px;top:1267.00px;font-size:15.30px;color:#5f5f5f;">0</div>
<div style="position:absolute;left:2438.8px;top:1227.3px;width:12px;height:172.70000000000005px;background:#d9d9d9;"></div>
<svg style="position:absolute;left:2435.8px;top:1218.3px;" width="18" height="18" viewBox="0 0 18 18"><circle cx="9" cy="9" r="7.2" fill="#c6c6c6" stroke="#fff" stroke-width="1.2"/><path transform="translate(9 9)" d="M-3.2 1.4 L0 -1.8 L3.2 1.4" fill="none" stroke="#fff" stroke-width="1.6" stroke-linecap="round" stroke-linejoin="round"/></svg>
<svg style="position:absolute;left:2435.8px;top:1391px;" width="18" height="18" viewBox="0 0 18 18"><circle cx="9" cy="9" r="7.2" fill="#c6c6c6" stroke="#fff" stroke-width="1.2"/><path transform="translate(9 9)" d="M-3.2 -1.4 L0 1.8 L3.2 -1.4" fill="none" stroke="#fff" stroke-width="1.6" stroke-linecap="round" stroke-linejoin="round"/></svg>
<div style="position:absolute;left:0px;top:58px;width:217px;height:1215px;background:#fff;"></div>
<div style="position:absolute;left:217px;top:58px;width:1px;height:1215px;background:#cdcdcd;"></div>
<div class="t" style="left:38.80px;top:89.00px;font-size:14.80px;color:#646464;letter-spacing:0.059px;">Übersicht</div>
<svg style="position:absolute;left:13px;top:86px;" width="20" height="20" viewBox="0 0 20 20"><path d="M1.5 17.2 L1.5 8.5 L9 2.2 L16.5 8.5 L16.5 17.2 L11.3 17.2 L11.3 11.6 L6.8 11.6 L6.8 17.2 Z" fill="none" stroke="#5c5c5c" stroke-width="1.05" stroke-linejoin="round" stroke-linecap="round"/></svg>
<div class="t" style="left:38.50px;top:125.00px;font-size:14.80px;color:#646464;letter-spacing:0.194px;">Alerts-Center</div>
<svg style="position:absolute;left:13px;top:122px;" width="20" height="20" viewBox="0 0 20 20"><path d="M2.3 14.3 L15.7 14.3 Q15.7 12.5 14.5 11.3 Q12.7 9.5 12.4 7.5 L12.4 5.5 Q12.4 2.3 9 2.3 Q5.6 2.3 5.6 5.5 L5.6 7.5 Q5.3 9.5 3.5 11.3 Q2.3 12.5 2.3 14.3 Z" fill="none" stroke="#5c5c5c" stroke-width="1.05" stroke-linejoin="round" stroke-linecap="round"/><path d="M6.6 15 Q9 18.5 11.4 15" fill="none" stroke="#5c5c5c" stroke-width="1.05" stroke-linejoin="round" stroke-linecap="round"/></svg>
<div style="position:absolute;left:0px;top:174px;width:217px;height:1px;background:#d6d6d6;"></div>
<div class="t" style="left:14.30px;top:201.00px;font-size:10.06px;color:#585858;font-weight:700;">MONITORING</div>
<div style="position:absolute;left:6px;top:224px;width:207px;height:36px;background:#e3e3e3;"></div>
<div style="position:absolute;left:2px;top:224px;width:4px;height:36px;background:#000;"></div>
<div class="t" style="left:38.50px;top:236.00px;font-size:14.80px;color:#111;letter-spacing:-0.172px;">Analysen</div>
<svg style="position:absolute;left:13px;top:233px;" width="20" height="20" viewBox="0 0 20 20"><rect x="2.7" y="6.8" width="2.5" height="6.2" rx="0.6" fill="none" stroke="#222" stroke-width="1.2" stroke-linejoin="round" stroke-linecap="round"/><rect x="7.6" y="10.2" width="2.7" height="2.8" rx="0.6" fill="none" stroke="#222" stroke-width="1.2" stroke-linejoin="round" stroke-linecap="round"/><rect x="12.7" y="2.7" width="2.6" height="10.3" rx="0.6" fill="none" stroke="#222" stroke-width="1.2" stroke-linejoin="round" stroke-linecap="round"/><line x1="1.2" y1="15.4" x2="16.9" y2="15.4" fill="none" stroke="#222" stroke-width="1.2" stroke-linejoin="round" stroke-linecap="round"/></svg>
<div class="t" style="left:38.50px;top:272.00px;font-size:14.80px;color:#646464;letter-spacing:-0.101px;">Fehlerbehebung</div>
<svg style="position:absolute;left:13px;top:270px;" width="20" height="20" viewBox="0 0 20 20"><path d="M1 8.2 L4.8 8.2 L6.7 4.4 L10.8 11.6 L13.9 7.4 L16.9 7.4" fill="none" stroke="#5c5c5c" stroke-width="1.05" stroke-linejoin="round" stroke-linecap="round"/></svg>
<div class="t" style="left:38.50px;top:307.00px;font-size:14.80px;color:#646464;letter-spacing:-0.059px;">Berichte</div>
<svg style="position:absolute;left:13px;top:304px;" width="20" height="20" viewBox="0 0 20 20"><path d="M3.3 2.1 L10.5 2.1 L15 6.6 L15 18 L3.3 18 Z" fill="none" stroke="#5c5c5c" stroke-width="1.05" stroke-linejoin="round" stroke-linecap="round"/><line x1="5.3" y1="9.7" x2="6.6" y2="9.7" fill="none" stroke="#5c5c5c" stroke-width="1.05" stroke-linejoin="round" stroke-linecap="round"/><line x1="8" y1="9.7" x2="13" y2="9.7" fill="none" stroke="#5c5c5c" stroke-width="1.05" stroke-linejoin="round" stroke-linecap="round"/><line x1="5.3" y1="11.9" x2="6.6" y2="11.9" fill="none" stroke="#5c5c5c" stroke-width="1.05" stroke-linejoin="round" stroke-linecap="round"/><line x1="8" y1="11.9" x2="13" y2="11.9" fill="none" stroke="#5c5c5c" stroke-width="1.05" stroke-linejoin="round" stroke-linecap="round"/><line x1="5.3" y1="14.2" x2="6.6" y2="14.2" fill="none" stroke="#5c5c5c" stroke-width="1.05" stroke-linejoin="round" stroke-linecap="round"/><line x1="8" y1="14.2" x2="13" y2="14.2" fill="none" stroke="#5c5c5c" stroke-width="1.05" stroke-linejoin="round" stroke-linecap="round"/></svg>
<div style="position:absolute;left:0px;top:356px;width:217px;height:1px;background:#d6d6d6;"></div>
<div class="t" style="left:14.60px;top:383.00px;font-size:10.04px;color:#585858;font-weight:700;">MANAGEMENT</div>
<div class="t" style="left:38.50px;top:416.00px;font-size:14.80px;color:#646464;letter-spacing:-0.125px;">Benutzer</div>
<svg style="position:absolute;left:13px;top:413px;" width="20" height="20" viewBox="0 0 20 20"><circle cx="9" cy="6.5" r="4.2" fill="none" stroke="#5c5c5c" stroke-width="1.05" stroke-linejoin="round" stroke-linecap="round"/><path d="M1.5 17 Q1.5 11.2 9 11.2 Q16.5 11.2 16.5 17 Z" fill="none" stroke="#5c5c5c" stroke-width="1.05" stroke-linejoin="round" stroke-linecap="round"/></svg>
<div class="t" style="left:38.50px;top:452.00px;font-size:14.80px;color:#646464;letter-spacing:-0.279px;">Gruppen</div>
<svg style="position:absolute;left:13px;top:449px;" width="20" height="20" viewBox="0 0 20 20"><circle cx="7.4" cy="7.3" r="3.2" fill="none" stroke="#5c5c5c" stroke-width="1.05" stroke-linejoin="round" stroke-linecap="round"/><path d="M1.5 15.5 Q1.5 10.8 7.4 10.8 Q10.2 10.8 11.6 12.2" fill="none" stroke="#5c5c5c" stroke-width="1.05" stroke-linejoin="round" stroke-linecap="round"/><line x1="1.5" y1="15.5" x2="16.8" y2="15.5" fill="none" stroke="#5c5c5c" stroke-width="1.05" stroke-linejoin="round" stroke-linecap="round"/><circle cx="13.7" cy="10.6" r="2" fill="none" stroke="#5c5c5c" stroke-width="1.05" stroke-linejoin="round" stroke-linecap="round"/><path d="M11.2 15.5 Q11.2 12.8 13.7 12.8 Q16.8 12.8 16.8 15.5" fill="none" stroke="#5c5c5c" stroke-width="1.05" stroke-linejoin="round" stroke-linecap="round"/></svg>
<div class="t" style="left:38.50px;top:487.00px;font-size:14.80px;color:#646464;letter-spacing:0.105px;">Standorte</div>
<svg style="position:absolute;left:13px;top:485px;" width="20" height="20" viewBox="0 0 20 20"><path d="M8.7 17.3 Q4.3 11 4.3 6.3 Q4.3 1.5 8.7 1.5 Q13.2 1.5 13.2 6.3 Q13.2 11 8.7 17.3 Z" fill="none" stroke="#5c5c5c" stroke-width="1.05" stroke-linejoin="round" stroke-linecap="round"/><circle cx="8.7" cy="7" r="0.8" fill="#5c5c5c"/></svg>
<div class="t" style="left:38.50px;top:523.00px;font-size:14.80px;color:#646464;letter-spacing:0.053px;">Arbeitsbereiche</div>
<svg style="position:absolute;left:13px;top:523px;" width="21" height="20" viewBox="0 0 21 20"><circle cx="6" cy="3.6" r="1.7" fill="none" stroke="#5c5c5c" stroke-width="1.05" stroke-linejoin="round" stroke-linecap="round"/><circle cx="14.2" cy="3.6" r="1.7" fill="none" stroke="#5c5c5c" stroke-width="1.05" stroke-linejoin="round" stroke-linecap="round"/><circle cx="10.1" cy="7.4" r="1.9" fill="none" stroke="#5c5c5c" stroke-width="1.05" stroke-linejoin="round" stroke-linecap="round"/><path d="M1.3 12.3 Q1.3 6.3 6 6.3 Q7.3 6.3 8.2 6.9" fill="none" stroke="#5c5c5c" stroke-width="1.05" stroke-linejoin="round" stroke-linecap="round"/><path d="M18.8 12.3 Q18.8 6.3 14.2 6.3 Q12.9 6.3 12 6.9" fill="none" stroke="#5c5c5c" stroke-width="1.05" stroke-linejoin="round" stroke-linecap="round"/><line x1="1.3" y1="12.3" x2="5.5" y2="12.3" fill="none" stroke="#5c5c5c" stroke-width="1.05" stroke-linejoin="round" stroke-linecap="round"/><line x1="14.6" y1="12.3" x2="18.8" y2="12.3" fill="none" stroke="#5c5c5c" stroke-width="1.05" stroke-linejoin="round" stroke-linecap="round"/><path d="M5.4 14.5 Q5.4 9.8 10.1 9.8 Q14.8 9.8 14.8 14.5 Z" fill="none" stroke="#5c5c5c" stroke-width="1.05" stroke-linejoin="round" stroke-linecap="round"/></svg>
<div class="t" style="left:38.70px;top:560.00px;font-size:14.80px;color:#646464;letter-spacing:-0.283px;">Geräte</div>
<svg style="position:absolute;left:13px;top:558px;" width="20" height="20" viewBox="0 0 20 20"><rect x="1.5" y="4.5" width="15.5" height="10.5" rx="1.5" fill="none" stroke="#5c5c5c" stroke-width="1.05" stroke-linejoin="round" stroke-linecap="round"/><line x1="1.5" y1="12.5" x2="17" y2="12.5" fill="none" stroke="#5c5c5c" stroke-width="1.05" stroke-linejoin="round" stroke-linecap="round"/><circle cx="8.7" cy="2.2" r="0.6" fill="#5c5c5c"/></svg>
<div class="t" style="left:38.70px;top:596.00px;font-size:14.80px;color:#646464;letter-spacing:-0.381px;">Apps</div>
<svg style="position:absolute;left:13px;top:594px;" width="20" height="20" viewBox="0 0 20 20"><rect x="2.6" y="2.5" width="5" height="4.9" rx="0.8" fill="none" stroke="#5c5c5c" stroke-width="1.05" stroke-linejoin="round" stroke-linecap="round"/><rect x="10.9" y="2.5" width="5" height="4.9" rx="0.8" fill="none" stroke="#5c5c5c" stroke-width="1.05" stroke-linejoin="round" stroke-linecap="round"/><rect x="2.6" y="11" width="5" height="4.6" rx="0.8" fill="none" stroke="#5c5c5c" stroke-width="1.05" stroke-linejoin="round" stroke-linecap="round"/><circle cx="13.2" cy="13.1" r="2.5" fill="none" stroke="#5c5c5c" stroke-width="1.05" stroke-linejoin="round" stroke-linecap="round"/></svg>
<div class="t" style="left:38.70px;top:632.00px;font-size:14.80px;color:#646464;letter-spacing:-0.351px;">Konto</div>
<svg style="position:absolute;left:13px;top:629px;" width="20" height="20" viewBox="0 0 20 20"><path d="M6 17.5 L1.5 17.5 L1.5 3 Q1.5 2 2.5 2 L8.5 2 Q9.5 2 9.5 3 L9.5 7.5" fill="none" stroke="#5c5c5c" stroke-width="1.05" stroke-linejoin="round" stroke-linecap="round"/><rect x="6" y="7.5" width="11" height="10" rx="1" fill="none" stroke="#5c5c5c" stroke-width="1.05" stroke-linejoin="round" stroke-linecap="round"/><circle cx="3.9" cy="4.5" r="0.5" fill="#5c5c5c"/><circle cx="6.6" cy="4.5" r="0.5" fill="#5c5c5c"/><circle cx="8.8" cy="10.2" r="0.5" fill="#5c5c5c"/><circle cx="8.8" cy="12.7" r="0.5" fill="#5c5c5c"/><circle cx="8.8" cy="15.2" r="0.5" fill="#5c5c5c"/><circle cx="11.5" cy="10.2" r="0.5" fill="#5c5c5c"/><circle cx="11.5" cy="12.7" r="0.5" fill="#5c5c5c"/><circle cx="11.5" cy="15.2" r="0.5" fill="#5c5c5c"/><circle cx="14.2" cy="10.2" r="0.5" fill="#5c5c5c"/><circle cx="14.2" cy="12.7" r="0.5" fill="#5c5c5c"/><circle cx="14.2" cy="15.2" r="0.5" fill="#5c5c5c"/></svg>
<div class="t" style="left:38.70px;top:668.00px;font-size:14.80px;color:#646464;letter-spacing:-0.080px;">Organisationseinstellun...</div>
<svg style="position:absolute;left:13px;top:667px;" width="20" height="20" viewBox="0 0 20 20"><path d="M7.44 2.54 L7.51 0.49 L9.89 0.49 L9.96 2.54 L11.67 3.25 L13.17 1.85 L14.85 3.53 L13.45 5.03 L14.16 6.74 L16.21 6.81 L16.21 9.19 L14.16 9.26 L13.45 10.97 L14.85 12.47 L13.17 14.15 L11.67 12.75 L9.96 13.46 L9.89 15.51 L7.51 15.51 L7.44 13.46 L5.73 12.75 L4.23 14.15 L2.55 12.47 L3.95 10.97 L3.24 9.26 L1.19 9.19 L1.19 6.81 L3.24 6.74 L3.95 5.03 L2.55 3.53 L4.23 1.85 L5.73 3.25 Z" fill="none" stroke="#5c5c5c" stroke-width="1.05" stroke-linejoin="round" stroke-linecap="round"/><circle cx="8.7" cy="8" r="2.6" fill="none" stroke="#5c5c5c" stroke-width="1.05" stroke-linejoin="round" stroke-linecap="round"/></svg>
<div style="position:absolute;left:0px;top:717px;width:217px;height:1px;background:#d6d6d6;"></div>
<div class="t" style="left:14.30px;top:744.00px;font-size:9.74px;color:#585858;font-weight:700;">SERVICES</div>
<div class="t" style="left:38.40px;top:778.00px;font-size:14.80px;color:#646464;letter-spacing:-0.070px;">Messaging</div>
<svg style="position:absolute;left:13px;top:776px;" width="20" height="20" viewBox="0 0 20 20"><path d="M2.4 12.3 A7.3 7.3 0 1 1 5.6 15.5 L1.6 16.3 Z" fill="none" stroke="#5c5c5c" stroke-width="1.05" stroke-linejoin="round" stroke-linecap="round"/></svg>
<div class="t" style="left:38.40px;top:814.00px;font-size:14.80px;color:#646464;letter-spacing:0.019px;">Meeting</div>
<svg style="position:absolute;left:13px;top:811px;" width="20" height="20" viewBox="0 0 20 20"><rect x="1.8" y="4.7" width="14.6" height="12.4" rx="1.3" fill="none" stroke="#5c5c5c" stroke-width="1.05" stroke-linejoin="round" stroke-linecap="round"/><line x1="1.8" y1="13.4" x2="16.4" y2="13.4" fill="none" stroke="#5c5c5c" stroke-width="1.05" stroke-linejoin="round" stroke-linecap="round"/><line x1="5.5" y1="2.3" x2="5.5" y2="4.7" fill="none" stroke="#5c5c5c" stroke-width="1.05" stroke-linejoin="round" stroke-linecap="round"/><line x1="12.4" y1="2.3" x2="12.4" y2="4.7" fill="none" stroke="#5c5c5c" stroke-width="1.05" stroke-linejoin="round" stroke-linecap="round"/></svg>
<div class="t" style="left:38.40px;top:850.00px;font-size:14.80px;color:#646464;letter-spacing:-0.202px;">Calling</div>
<svg style="position:absolute;left:13px;top:844px;" width="20" height="22" viewBox="0 0 20 22"><path d="M3 6.5 L6.6 6.5 Q7.5 7 7.3 8.5 L7 10.5 Q8.5 13 11.5 14.5 L12.5 14 Q13.5 13.8 15 14.8 L15.6 17 Q15.6 19.5 14 19.6 Q6 17 2.5 9 Q2.2 6.5 3 6.5 Z" fill="none" stroke="#5c5c5c" stroke-width="1.05" stroke-linejoin="round" stroke-linecap="round"/></svg>
<div class="t" style="left:38.40px;top:886.00px;font-size:14.80px;color:#646464;letter-spacing:0.042px;">Vidcast</div>
<svg style="position:absolute;left:13px;top:880px;" width="20" height="22" viewBox="0 0 20 22"><path d="M3 6.5 L15.5 13 L3 19.5 Z" fill="none" stroke="#5c5c5c" stroke-width="1.05" stroke-linejoin="round" stroke-linecap="round"/></svg>
<div class="t" style="left:38.40px;top:922.00px;font-size:14.80px;color:#646464;letter-spacing:0.006px;">Hybrid</div>
<svg style="position:absolute;left:13px;top:917px;" width="20" height="20" viewBox="0 0 20 20"><path d="M4 17.4 L13.8 17.4 Q16.6 17.4 16.6 14 Q16.6 10.5 13 9.6 Q12 6.2 8.8 6.2 Q5.5 6.2 4.8 9.8 Q1.3 10.5 1.3 13.8 Q1.3 17.4 4 17.4 Z" fill="none" stroke="#5c5c5c" stroke-width="1.05" stroke-linejoin="round" stroke-linecap="round"/></svg>
<div class="t" style="left:42.80px;top:1252.00px;font-size:14.80px;color:#646464;letter-spacing:-0.213px;">Placetel</div>
<svg style="position:absolute;left:11px;top:1245px;" width="24" height="27" viewBox="0 0 24 27"><path d="M2 24.8 L2 3.3 Q2 1.8 3.5 1.8 L12.2 1.8 Q13.7 1.8 13.7 3.3 L13.7 9.8" fill="none" stroke="#5c5c5c" stroke-width="1.05" stroke-linejoin="round" stroke-linecap="round"/><rect x="5.7" y="9.8" width="16" height="15" rx="1.5" fill="none" stroke="#5c5c5c" stroke-width="1.05" stroke-linejoin="round" stroke-linecap="round"/><circle cx="9.4" cy="13.5" r="0.6" fill="#5c5c5c"/><circle cx="9.4" cy="17.5" r="0.6" fill="#5c5c5c"/><circle cx="9.4" cy="21.5" r="0.6" fill="#5c5c5c"/><circle cx="13.4" cy="13.5" r="0.6" fill="#5c5c5c"/><circle cx="13.4" cy="17.5" r="0.6" fill="#5c5c5c"/><circle cx="13.4" cy="21.5" r="0.6" fill="#5c5c5c"/><circle cx="17.4" cy="13.5" r="0.6" fill="#5c5c5c"/><circle cx="17.4" cy="17.5" r="0.6" fill="#5c5c5c"/><circle cx="17.4" cy="21.5" r="0.6" fill="#5c5c5c"/><circle cx="5.4" cy="5.5" r="0.6" fill="#5c5c5c"/><circle cx="9.4" cy="5.5" r="0.6" fill="#5c5c5c"/></svg>
<div style="position:absolute;left:0px;top:0px;width:2554px;height:57px;background:#111;"></div>
<div style="position:absolute;left:0px;top:57px;width:2554px;height:1px;background:#000;"></div>
<div class="t" style="left:17.93px;top:15.00px;font-size:26.34px;color:#fff;font-weight:700;">webex</div>
<div class="t" style="left:108.30px;top:21.00px;font-size:19.40px;color:#fff;letter-spacing:-0.480px;">Control Hub</div>
<div style="position:absolute;left:1038px;top:12px;width:478px;height:30px;border:1px solid #6f6f6f;border-radius:8px;background:#3e3e3e;"></div>
<svg style="position:absolute;left:1048px;top:19px;" width="20" height="20" viewBox="0 0 20 20"><circle cx="8.5" cy="7.5" r="6.4" fill="none" stroke="#d0d0d0" stroke-width="1.3"/><line x1="13.1" y1="12.1" x2="18.5" y2="16.5" stroke="#d0d0d0" stroke-width="1.3" stroke-linecap="round"/></svg>
<div class="t" style="left:1083.30px;top:22.00px;font-size:14.80px;color:#c4c4c4;letter-spacing:-0.294px;">Suchen</div>
<svg style="position:absolute;left:2370px;top:15px;" width="24" height="24" viewBox="0 0 24 24"><path d="M3.2 19.7 L20.8 19.7 L20.8 18 Q20.8 16.5 19.5 15.5 L16.6 12.3 Q15.7 11.3 15.7 10 L15.7 7.5 Q15.7 3.6 11.7 3.6 Q7.7 3.6 7.7 7.5 L7.7 10 Q7.7 11.3 6.8 12.3 L3.9 15.5 Q3.2 16.5 3.2 18 Z" fill="none" stroke="#fff" stroke-width="1.3" stroke-linejoin="round"/><path d="M8.6 20.2 Q8.6 22.4 11.7 22.4 Q14.8 22.4 14.8 20.2" fill="none" stroke="#fff" stroke-width="1.3"/></svg>
<div style="position:absolute;left:2384px;top:10px;width:16.2px;height:16.2px;border-radius:50%;background:#db1f2e;"></div>
<svg style="position:absolute;left:2384px;top:10px;" width="16" height="16" viewBox="0 0 16 16"><path d="M5.9 5.6 L8.7 3.7 L8.7 12" fill="none" stroke="#fff" stroke-width="1.7" stroke-linejoin="miter"/></svg>
<svg style="position:absolute;left:2410px;top:16px;" width="24" height="24" viewBox="0 0 24 24"><circle cx="12" cy="12" r="9.3" fill="none" stroke="#fff" stroke-width="1.3"/><path d="M9.3 10.3 Q9.3 7.4 12 7.4 Q14.8 7.4 14.8 9.9 Q14.8 11.5 13.2 12.3 Q12 12.9 12 14.3" fill="none" stroke="#fff" stroke-width="1.3" stroke-linecap="round"/><circle cx="12" cy="16.6" r="0.85" fill="#fff"/></svg>
<svg style="position:absolute;left:2452px;top:19px;" width="17" height="19" viewBox="0 0 17 19"><rect x="2" y="1.5" width="12.4" height="15.6" rx="1.2" fill="none" stroke="#fff" stroke-width="1.3"/><line x1="2" y1="6.5" x2="14.4" y2="6.5" stroke="#fff" stroke-width="1.3"/><line x1="2" y1="11.7" x2="14.4" y2="11.7" stroke="#fff" stroke-width="1.3"/><circle cx="4.4" cy="3.4" r="0.5" fill="#e04040"/></svg>
<div style="position:absolute;left:2460px;top:10px;width:16.2px;height:16.2px;border-radius:50%;background:#1d8160;"></div>
<svg style="position:absolute;left:2460px;top:10px;" width="16" height="16" viewBox="0 0 16 16"><path d="M3.4 8.3 L6.6 11.2 L12.6 5" fill="none" stroke="#fff" stroke-width="1.4" stroke-linecap="round" stroke-linejoin="round"/></svg>
<svg style="position:absolute;left:2493px;top:7px;" width="42" height="42" viewBox="0 0 42 42"><defs><clipPath id="avc"><circle cx="21" cy="21" r="19.2"/></clipPath></defs><g clip-path="url(#avc)"><rect x="0" y="0" width="42" height="42" fill="#c3c1bf"/><path d="M13 42 L14.5 30 L26 30 L30 42 Z" fill="#dcbfae"/><path d="M9.5 27 Q8.5 12 18 8.5 Q26 8 28 15 Q29.5 24 30 31 Q33 35 33.5 40 L29.5 42 Q27 36 26 30 Q26 18 21 14 Q14 13 12 20 Q11.5 25 12 30 Z" fill="#8e5a3e"/><ellipse cx="18.8" cy="21" rx="7.3" ry="9.6" fill="#dcb49c"/><ellipse cx="16" cy="19.5" rx="1" ry="0.6" fill="#6b4a3a"/><ellipse cx="21.5" cy="19.5" rx="1" ry="0.6" fill="#6b4a3a"/><path d="M16 26 Q18.5 27 21 26" fill="none" stroke="#b57a6a" stroke-width="0.9"/></g><circle cx="21" cy="20.8" r="19.3" fill="none" stroke="#1a6fc9" stroke-width="1.3"/></svg></body></html>
